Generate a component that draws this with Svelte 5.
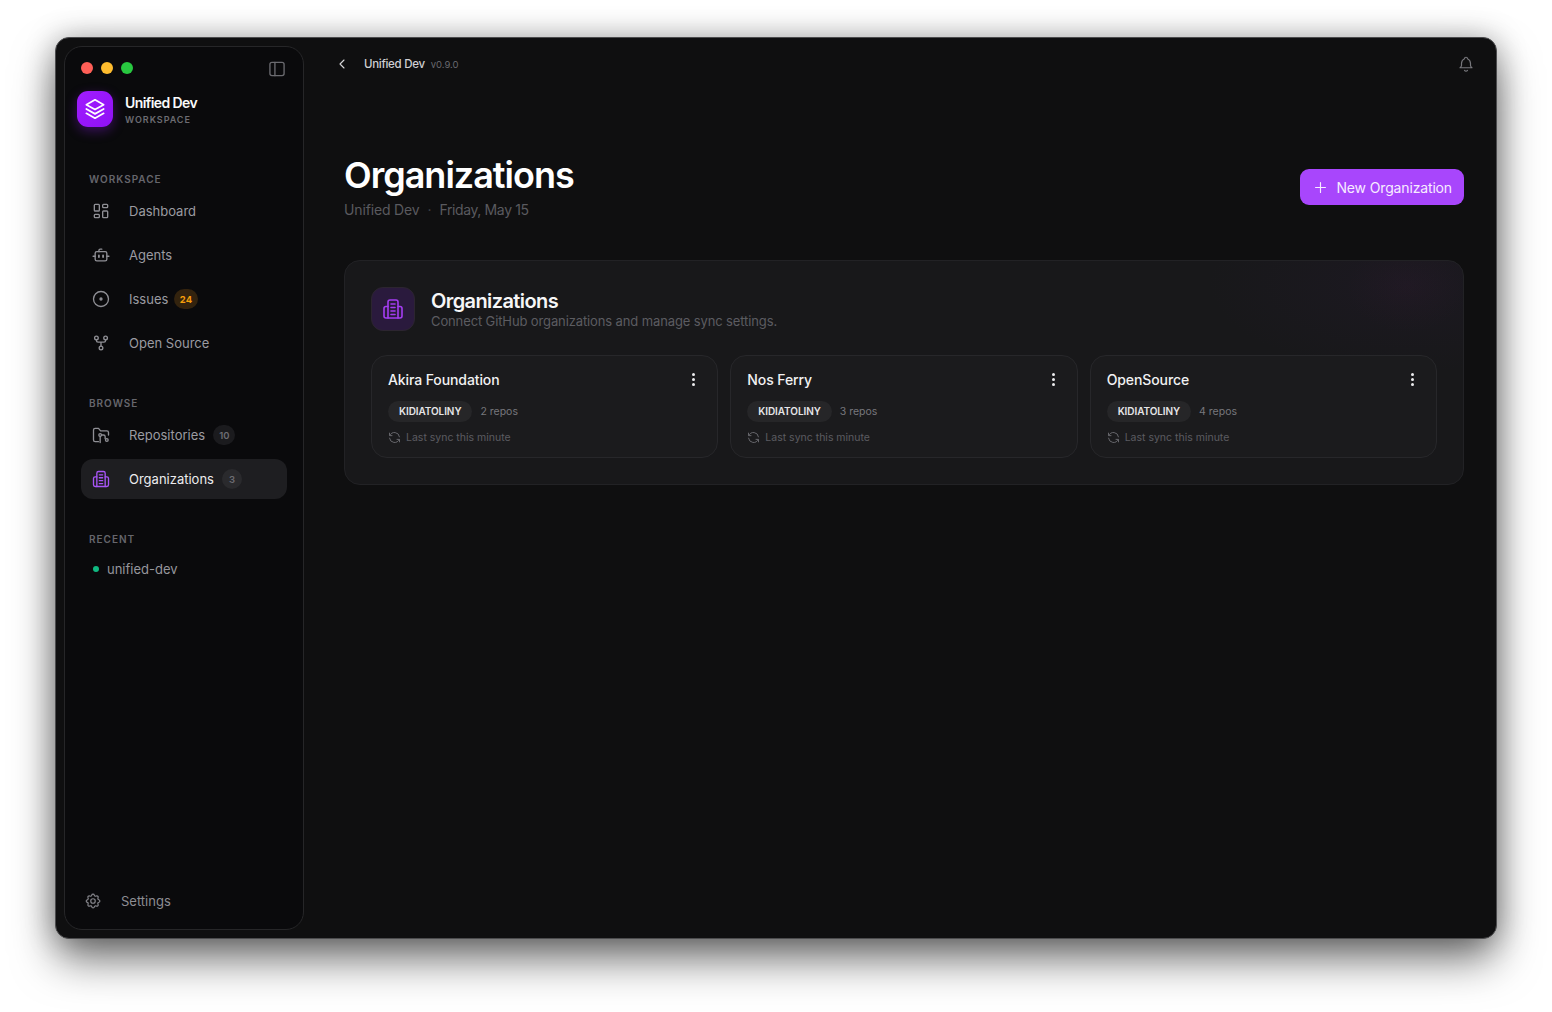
<script>
  const workspace = [
    { label: 'Dashboard', icon: 'dash' },
    { label: 'Agents', icon: 'robot' },
    { label: 'Issues', icon: 'issue', badge: '24', tone: 'warn' },
    { label: 'Open Source', icon: 'fork' }
  ];
  const browse = [
    { label: 'Repositories', icon: 'repo', badge: '10' },
    { label: 'Organizations', icon: 'org', badge: '3', active: true }
  ];
  const orgs = [
    { name: 'Akira Foundation', repos: '2 repos' },
    { name: 'Nos Ferry', repos: '3 repos' },
    { name: 'OpenSource', repos: '4 repos' }
  ];
</script>

{#snippet icon(name)}
  <svg class="ico" viewBox="0 0 24 24" fill="none" stroke="currentColor" stroke-width="1.6" stroke-linecap="round" stroke-linejoin="round">
    {#if name === 'dash'}
      <path d="M5 4h4a1 1 0 0 1 1 1v6a1 1 0 0 1-1 1H5a1 1 0 0 1-1-1V5a1 1 0 0 1 1-1" />
      <path d="M5 16h4a1 1 0 0 1 1 1v2a1 1 0 0 1-1 1H5a1 1 0 0 1-1-1v-2a1 1 0 0 1 1-1" />
      <path d="M15 12h4a1 1 0 0 1 1 1v6a1 1 0 0 1-1 1h-4a1 1 0 0 1-1-1v-6a1 1 0 0 1 1-1" />
      <path d="M15 4h4a1 1 0 0 1 1 1v2a1 1 0 0 1-1 1h-4a1 1 0 0 1-1-1V5a1 1 0 0 1 1-1" />
    {:else if name === 'robot'}
      <path d="M7 8h10a2 2 0 0 1 2 2v7a2 2 0 0 1-2 2H7a2 2 0 0 1-2-2v-7a2 2 0 0 1 2-2" />
      <path d="M9.500 8V6.500a1.500 1.500 0 0 1 1.500-1.500h2" />
      <path d="M2.500 13.500H5M19 13.500h2.500" />
      <path d="M9.500 12.500v2M14.500 12.500v2" stroke-width="2.200" />
    {:else if name === 'issue'}
      <circle cx="12" cy="12" r="9" />
      <circle cx="12" cy="12" r="1.200" fill="currentColor" />
    {:else if name === 'fork'}
      <circle cx="12" cy="18" r="2.200" />
      <circle cx="6.500" cy="6" r="2.200" />
      <circle cx="17.500" cy="6" r="2.200" />
      <path d="M6.500 8.200v.8a2 2 0 0 0 2 2h7a2 2 0 0 0 2-2v-.8M12 11v4.800" />
    {:else if name === 'repo'}
      <path d="M9 20H5a2 2 0 0 1-2-2V6a2 2 0 0 1 2-2h4l2.500 3H19a2 2 0 0 1 2 2v3" />
      <circle cx="11" cy="12" r="1.600" />
      <circle cx="19" cy="18" r="1.600" />
      <path d="M11 13.600V21M12.600 12H15a2 2 0 0 1 2 2v2.400" />
    {:else if name === 'org'}
      <path d="M7 21V5a2 2 0 0 1 2-2h6a2 2 0 0 1 2 2v16" />
      <path d="M7 9.500H5A2 2 0 0 0 3 11.500V19A2 2 0 0 0 5 21H19A2 2 0 0 0 21 19V11.500A2 2 0 0 0 19 9.500H17" />
      <path d="M10 7h4M10 10.500h4M10 14h4M10 17.500h4" />
    {:else if name === 'gear'}
      <path d="M10.300 4.300c.4-1.800 3-1.800 3.400 0a1.700 1.700 0 0 0 2.600 1.100c1.500-.9 3.300.8 2.400 2.400a1.700 1.700 0 0 0 1.100 2.500c1.800.4 1.800 3 0 3.400a1.700 1.700 0 0 0-1.100 2.600c.9 1.500-.8 3.300-2.400 2.400a1.700 1.700 0 0 0-2.500 1.100c-.4 1.800-3 1.800-3.400 0a1.700 1.700 0 0 0-2.600-1.100c-1.500.9-3.300-.8-2.400-2.400a1.700 1.700 0 0 0-1.100-2.500c-1.800-.4-1.800-3 0-3.400a1.700 1.700 0 0 0 1.100-2.600c-.9-1.500.8-3.300 2.400-2.400 1 .6 2.300.1 2.500-1.100" />
      <circle cx="12" cy="12" r="3" />
    {:else if name === 'sync'}
      <path d="M20 11A8.100 8.100 0 0 0 4.500 9M4 5v4h4" />
      <path d="M4 13a8.100 8.100 0 0 0 15.500 2M20 19v-4h-4" />
    {:else if name === 'bell'}
      <path d="M10 5a2 2 0 1 1 4 0 7 7 0 0 1 4 6v3a4 4 0 0 0 2 3H4a4 4 0 0 0 2-3v-3a7 7 0 0 1 4-6" />
      <path d="M10 20.500a2.500 2.500 0 0 0 4 0" />
    {:else if name === 'panel'}
      <rect x="3.500" y="4" width="17" height="16" rx="2.500" />
      <path d="M9.500 4v16" />
    {:else if name === 'back'}
      <path d="M15 6l-6 6 6 6" />
    {:else if name === 'plus'}
      <path d="M12 5v14M5 12h14" />
    {:else if name === 'stack'}
      <path d="M12 3.500 4 8l8 4.500L20 8z" />
      <path d="M4 12l8 4.500 8-4.500" />
      <path d="M4 16l8 4.500 8-4.500" />
    {/if}
  </svg>
{/snippet}

{#snippet navItem(item)}
  <div class="nav-item" class:active={item.active}>
    <span class="nav-icon">{@render icon(item.icon)}</span>
    <span class="nav-label">{item.label}</span>
    {#if item.badge}
      <span class="badge" class:warn={item.tone === 'warn'}>{item.badge}</span>
    {/if}
  </div>
{/snippet}

<div class="page">
<div class="window">
  <aside class="sidebar">
    <div class="chrome">
      <div class="lights"><i class="red"></i><i class="yellow"></i><i class="green"></i></div>
      <span class="panel-btn">{@render icon('panel')}</span>
    </div>
    <div class="brand">
      <div class="logo">{@render icon('stack')}</div>
      <div class="brand-text">
        <div class="brand-name">Unified Dev</div>
        <div class="brand-sub">WORKSPACE</div>
      </div>
    </div>

    <div class="group first">
      <div class="group-title">WORKSPACE</div>
      {#each workspace as item}{@render navItem(item)}{/each}
    </div>
    <div class="group second">
      <div class="group-title">BROWSE</div>
      {#each browse as item}{@render navItem(item)}{/each}
    </div>
    <div class="group third">
      <div class="group-title">RECENT</div>
      <div class="recent"><i></i>unified-dev</div>
    </div>

    <div class="settings">
      <span class="settings-icon">{@render icon('gear')}</span>
      <span>Settings</span>
    </div>
  </aside>

  <main class="main">
    <header class="topbar">
      <span class="back">{@render icon('back')}</span>
      <span class="crumb">Unified Dev</span>
      <span class="version">v0.9.0</span>
      <span class="bell">{@render icon('bell')}</span>
    </header>

    <section class="hero">
      <div>
        <h1>Organizations</h1>
        <div class="subtitle"><span>Unified Dev</span><span class="dot">·</span><span class="date">Friday, May 15</span></div>
      </div>
      <button class="primary"><span class="plus">{@render icon('plus')}</span>New Organization</button>
    </section>

    <section class="panel">
      <div class="panel-head">
        <div class="panel-icon">{@render icon('org')}</div>
        <div>
          <h2>Organizations</h2>
          <p>Connect GitHub organizations and manage sync settings.</p>
        </div>
      </div>
      <div class="cards">
        {#each orgs as org}
          <article class="card">
            <div class="card-top">
              <h3>{org.name}</h3>
              <span class="kebab"><i></i><i></i><i></i></span>
            </div>
            <div class="card-meta">
              <span class="chip">KIDIATOLINY</span>
              <span class="repos">{org.repos}</span>
            </div>
            <div class="card-sync">
              <span class="sync-icon">{@render icon('sync')}</span>
              Last sync this minute
            </div>
          </article>
        {/each}
      </div>
    </section>
  </main>
</div>
</div>

<style>
  :global(body) {
    margin: 0;
    background: #fff;
    font-family: Inter, "Liberation Sans", sans-serif;
  }
  .page {
    box-sizing: border-box;
    height: 1012px;
    padding: 37px 0 0 55px;
    overflow: hidden;
  }
  .window {
    box-sizing: border-box;
    width: 1442px;
    height: 902px;
    display: flex;
    padding: 8px;
    background: #0f0f10;
    border: 1px solid #4c4c4e;
    border-radius: 14px;
    box-shadow: 0 22px 44px -2px rgba(0, 0, 0, 0.55), 0 0 30px rgba(0, 0, 0, 0.28);
  }
  .ico { display: block; width: 100%; height: 100%; }

  .sidebar {
    box-sizing: border-box;
    width: 240px;
    flex: none;
    display: flex;
    flex-direction: column;
    padding: 0 16px;
    background: #0a0a0c;
    border: 1px solid #262628;
    border-radius: 18px;
  }
  .chrome {
    display: flex;
    align-items: center;
    justify-content: space-between;
    height: 14px;
    margin-top: 14px;
  }
  .lights { display: flex; gap: 8px; }
  .lights i { width: 12px; height: 12px; border-radius: 50%; }
  .red { background: #ff5f57; }
  .yellow { background: #febc2e; }
  .green { background: #28c840; }
  .panel-btn { width: 20px; height: 20px; color: #6b6b70; margin-top: 2px; }

  .brand { display: flex; align-items: center; gap: 12px; margin: 16px 0 0 -4px; }
  .brand-text { padding-top: 2px; }
  .logo {
    width: 36px; height: 36px; box-sizing: border-box; padding: 5px;
    border-radius: 11px; color: #fff;
    background: linear-gradient(135deg, #a11dff, #8f11f5);
    box-shadow: 0 4px 12px rgba(147, 30, 240, 0.35);
  }
  .brand-name { font-size: 14px; font-weight: 600; line-height: 20px; color: #fafafa; letter-spacing: -0.6px; }
  .brand-sub { font-size: 9px; font-weight: 600; line-height: 14px; color: #6c6c72; letter-spacing: 0.95px; }

  .group-title {
    font-size: 10px; font-weight: 600; line-height: 12px; color: #66666c; letter-spacing: 1px;
    padding-left: 8px; height: 14px;
  }
  .first { margin-top: 46px; }
  .second { margin-top: 34px; }
  .third { margin-top: 34px; }

  .nav-item {
    height: 40px; display: flex; align-items: center; margin: 4px 0 0; padding-left: 10px;
    border-radius: 12px; color: #9b9ba1; font-size: 13px;
  }
  .nav-item.active { background: #1e1e21; color: #ececee; }
  .nav-icon { width: 20px; height: 20px; flex: none; margin-right: 18px; color: #8f8f95; }
  .active .nav-icon { color: #a855f7; }
  .nav-label { white-space: nowrap; }
  .badge {
    min-width: 8px; height: 20px; box-sizing: content-box; padding: 0 6px; margin-left: 8px;
    display: flex; align-items: center; justify-content: center;
    border-radius: 10px; background: #1b1b1e; color: #6d6d73; font-size: 9.500px; font-weight: 600;
  }
  .active .badge { background: #2a2a2d; }
  .badge.warn { background: #33230e; color: #f59e0b; font-weight: 700; margin-left: 6px; padding: 0 5.500px; }

  .recent { display: flex; align-items: center; height: 20px; margin: 12px 0 0 12px; color: #96969c; font-size: 13px; }
  .recent i { width: 6px; height: 6px; border-radius: 50%; background: #10b981; margin-right: 8px; }

  .settings {
    margin-top: auto; margin-bottom: 18px; margin-left: 3px; height: 20px;
    display: flex; align-items: center; color: #8d8d93; font-size: 13px;
  }
  .settings-icon { width: 18px; height: 18px; margin-right: 19px; color: #85858b; }

  .main { flex: 1; min-width: 0; padding: 0 24px 0 40px; }
  .topbar { display: flex; align-items: center; height: 36px; }
  .back { width: 16px; height: 16px; color: #d8d8da; margin-left: -10px; margin-right: 14px; }
  .crumb { font-size: 11.500px; font-weight: 500; color: #d0d0d3; letter-spacing: -0.3px; }
  .version { font-size: 9.500px; color: #68686d; margin-left: 6px; }
  .bell { width: 18px; height: 18px; margin-left: auto; color: #77777c; margin-right: -11px; }

  .hero { display: flex; justify-content: space-between; align-items: flex-start; margin-top: 71px; }
  h1 { margin: 0; font-size: 36px; line-height: 44px; font-weight: 600; color: #fff; letter-spacing: -1px; }
  .subtitle { display: flex; gap: 8px; font-size: 14px; line-height: 20px; color: #5a5a5f; margin-top: 3px; letter-spacing: -0.15px; }
  .subtitle .dot { color: #444449; }
  .subtitle .date { letter-spacing: -0.38px; }
  .primary {
    height: 36px; margin-top: 16px; padding: 0 12px; display: flex; align-items: center; gap: 7px;
    border: 0; border-radius: 9px; background: #a846fc; color: #f7ecff;
    font: 400 14px Inter, sans-serif; letter-spacing: -0.15px;
  }
  .plus { width: 17px; height: 17px; display: block; }

  .panel {
    box-sizing: border-box; height: 225px; margin-top: 40px; padding: 26px;
    border: 1px solid #222225; border-radius: 16px;
    background:
      radial-gradient(60px 45px at 95% 12%, rgba(90, 30, 70, 0.07), transparent),
      radial-gradient(200px 90px at 95% 10%, rgba(60, 30, 90, 0.11), transparent),
      #18181a;
  }
  .panel-head { display: flex; align-items: center; gap: 16px; }
  .panel-icon {
    box-sizing: border-box; width: 44px; height: 44px; padding: 9px; border-radius: 12px;
    background: #2a1a3d; border: 1px solid #2c2530; color: #a43df2;
  }
  h2 { margin: 1px 0 0; font-size: 20px; line-height: 24px; font-weight: 600; color: #f6f6f7; letter-spacing: -0.6px; }
  .panel-head p { margin: -1px 0 0; font-size: 13px; line-height: 18px; color: #5c5c61; letter-spacing: -0.12px; }

  .cards { display: grid; grid-template-columns: repeat(3, 1fr); gap: 12px; margin-top: 24px; }
  .card {
    box-sizing: border-box; height: 103px; padding: 13px 16px; border: 1px solid #27272a; border-radius: 16px;
    background: #1b1b1d;
  }
  .card-top { display: flex; justify-content: space-between; align-items: center; height: 20px; }
  h3 { margin: 0; font-size: 14px; font-weight: 500; color: #f1f1f2; letter-spacing: -0.1px; }
  .kebab { display: flex; flex-direction: column; gap: 2px; margin-right: 6px; }
  .kebab i { width: 3px; height: 3px; border-radius: 50%; background: #ececee; }
  .card-meta { display: flex; align-items: center; gap: 8px; margin-top: 12px; }
  .chip {
    height: 21px; line-height: 21px; padding: 0 11px; border-radius: 11px; background: #262628;
    font-size: 10px; font-weight: 600; color: #e5e5e7; letter-spacing: -0.08px;
  }
  .repos { font-size: 10.500px; color: #77777c; }
  .card-sync { display: flex; align-items: center; gap: 4px; margin-top: 7px; height: 16px; font-size: 10.500px; color: #5c5c61; }
  .sync-icon { width: 15px; height: 15px; margin-left: -1px; color: #66666b; }
</style>
